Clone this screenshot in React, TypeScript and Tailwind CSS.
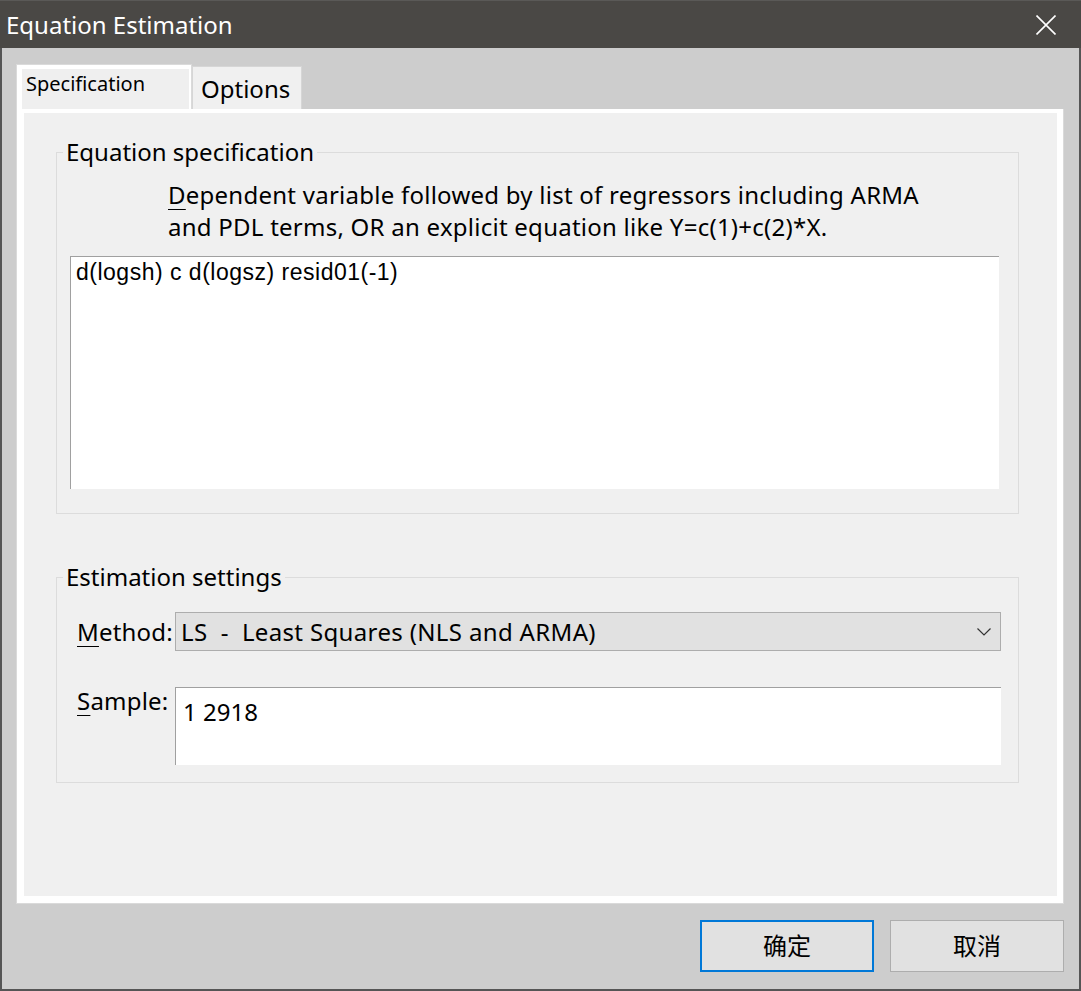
const sans = "font-['Noto_Sans','Noto_Sans_CJK_SC',sans-serif]";

function GroupBox({ title, className, children }: { title: string; className: string; children: React.ReactNode }) {
  return (
    <fieldset className={`w-[963px] border border-[#dcdcdc] ${className}`}>
      <legend className="ml-[6px] px-[3px] text-[24px] leading-[32px] text-black">{title}</legend>
      {children}
    </fieldset>
  );
}

export default function App() {
  return (
    <div className={`w-[1081px] h-[991px] flex flex-col bg-[#555555] px-[2px] pb-[2px] ${sans}`}>
      {/* title bar */}
      <div className="h-[48px] -mx-[2px] flex items-center justify-between bg-[#4a4845] border-t border-[#5a5957] pl-[6px] pr-[25px]">
        <span className="text-white text-[24px] leading-[32px]">Equation Estimation</span>
        <svg width="20" height="20" viewBox="0 0 20 20" className="mt-[1px]">
          <path d="M0.5 0.5 L19.5 19.5 M19.5 0.5 L0.5 19.5" stroke="#ffffff" strokeWidth="1.6" />
        </svg>
      </div>

      <div className="flex-1 flex flex-col bg-[#cdcdcd] pl-[14px] pr-[15px] pt-[16px] pb-[17px]">
        {/* tabs */}
        <div className="h-[45px] flex items-end">
          <div className="w-[176px] h-[45px] flex border-l border-t border-r border-[#dadada] bg-white pl-[5px] pt-[4px] pr-[2px]">
            <div className="flex-1 bg-[#efefef] pl-[4px] pt-[1px] text-[20px] leading-[28px] text-black">Specification</div>
          </div>
          <div className="w-[110px] h-[43px] border-l border-t border-r border-[#d6d6d6] bg-[#f0f0f0] pl-[8px] pt-[6px] text-[24px] leading-[32px] text-black">
            Options
          </div>
        </div>

        {/* panel */}
        <div className="h-[795px] flex border-l border-r border-b border-[#dadada] bg-white pt-[4px] pl-[7px] pr-[6px] pb-[7px]">
          <div className="flex-1 flex flex-col bg-[#f0f0f0] pl-[32px] pt-[23px] text-black">
            <GroupBox title="Equation specification" className="pb-[24px]">
              <p className="pl-[111px] pt-[11px] text-[24px] leading-[32px] tracking-[0.25px]">
                <span className="underline underline-offset-[5px] decoration-1">D</span>ependent variable followed by list of regressors including ARMA
                <br />
                and PDL terms, OR an explicit equation like Y=c(1)+c(2)*X.
              </p>
              <div className="ml-[13px] mt-[13px] w-[929px] h-[233px] border-t border-l border-[#a0a0a0] bg-white pl-[5px] pt-[2px] font-['Liberation_Sans',Arial,sans-serif] text-[23px] leading-[26px] tracking-[0.5px]">
                d(logsh) c d(logsz) resid01(-1)
              </div>
            </GroupBox>

            <GroupBox title="Estimation settings" className="mt-[47px] pb-[17px]">
              <div className="mt-[19px] pl-[20px] flex items-center">
                <span className="w-[98px] text-[24px] leading-[32px] tracking-[0.2px]">
                  <span className="underline underline-offset-[5px] decoration-1">M</span>ethod:
                </span>
                <div className="w-[826px] h-[39px] flex items-center justify-between border border-[#adadad] bg-[#e1e1e1] pl-[5px] pr-[9px]">
                  <span className="text-[24px] leading-[32px] whitespace-pre tracking-[0.35px]">LS  -  Least Squares (NLS and ARMA)</span>
                  <svg width="14" height="8" viewBox="0 0 14 8">
                    <path d="M0.5 0.5 L7 7 L13.5 0.5" fill="none" stroke="#333333" strokeWidth="1.2" />
                  </svg>
                </div>
              </div>
              <div className="mt-[36px] pl-[20px] flex items-start">
                <span className="w-[98px] text-[24px] leading-[28px] tracking-[0.2px]">
                  <span className="underline underline-offset-[5px] decoration-1">S</span>ample:
                </span>
                <div className="w-[826px] h-[78px] border-t border-l border-[#a0a0a0] bg-white pl-[7px] pt-[8px] text-[24px] leading-[32px]">
                  1 2918
                </div>
              </div>
            </GroupBox>
          </div>
        </div>

        {/* buttons */}
        <div className="mt-[16px] flex justify-end gap-[16px]">
          <button className="w-[174px] h-[52px] border-2 border-[#0078d7] bg-[#e1e1e1] text-[24px] leading-[32px] text-black">确定</button>
          <button className="w-[174px] h-[52px] border border-[#adadad] bg-[#e1e1e1] text-[24px] leading-[32px] text-black">取消</button>
        </div>
      </div>
    </div>
  );
}
